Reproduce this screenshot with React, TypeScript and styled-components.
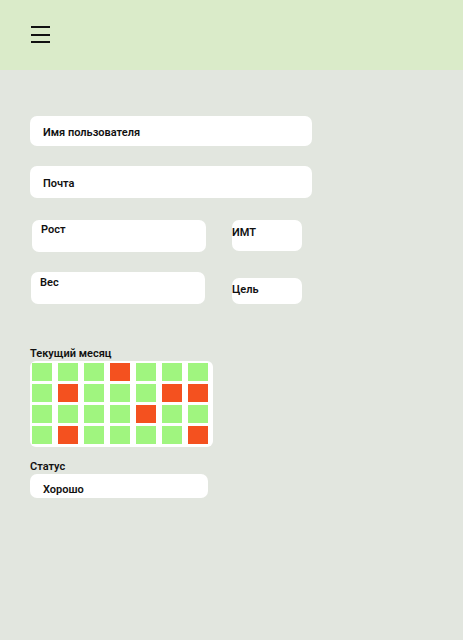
import React from 'react'
import styled, { createGlobalStyle } from 'styled-components'

const GlobalStyle = createGlobalStyle`
  html, body {
    margin: 0;
    padding: 0;
    background: #e2e6df;
    font-family: Roboto, Inter, 'Noto Sans', sans-serif;
    color: #111;
  }
`

const Page = styled.div`
  min-height: 640px;
  background: #e2e6df;
`

const Header = styled.header`
  height: 70px;
  background: #daebc9;
  display: flex;
  align-items: center;
  padding-left: 31px;
  box-sizing: border-box;
`

const MenuButton = styled.button`
  width: 19px;
  height: 17px;
  padding: 0;
  border: 0;
  background: transparent;
  display: flex;
  flex-direction: column;
  justify-content: space-between;
  cursor: pointer;
  margin-top: -1px;
`

const MenuLine = styled.span`
  display: block;
  height: 2px;
  background: #111;
`

const Main = styled.main`
  padding: 46px 0 0 30px;
  display: flex;
  flex-direction: column;
`

const Label = styled.div<{ $pt?: number }>`
  font-size: 11px;
  line-height: 14px;
  font-weight: 600;
  padding-top: ${({ $pt }) => $pt ?? 0}px;
`

const Field = styled.div<{ $width: number; $height: number; $mt?: number; $pad?: string; $align?: string }>`
  box-sizing: border-box;
  width: ${({ $width }) => $width}px;
  height: ${({ $height }) => $height}px;
  margin-top: ${({ $mt }) => $mt ?? 0}px;
  padding: ${({ $pad }) => $pad ?? '0 13px'};
  background: #fff;
  border-radius: 7px;
  display: flex;
  align-items: ${({ $align }) => $align ?? 'center'};
  font-size: 11px;
  line-height: 14px;
  font-weight: 600;
`

const MetricRow = styled.div<{ $mt: number; $ml: number; $gap: number }>`
  display: flex;
  align-items: flex-start;
  gap: ${({ $gap }) => $gap}px;
  margin-top: ${({ $mt }) => $mt}px;
  margin-left: ${({ $ml }) => $ml}px;
`

const Section = styled.section<{ $mt: number }>`
  margin-top: ${({ $mt }) => $mt}px;
`

const Calendar = styled.div`
  box-sizing: border-box;
  width: 183px;
  padding: 2px 5px 3px 2px;
  background: #fff;
  border-radius: 6px;
  display: grid;
  grid-template-columns: repeat(7, 20px);
  grid-auto-rows: 18px;
  column-gap: 6px;
  row-gap: 3px;
`

const Day = styled.div<{ $bad: boolean }>`
  background: ${({ $bad }) => ($bad ? '#f4511f' : '#a0f57f')};
`

const month = [
  0, 0, 0, 1, 0, 0, 0,
  0, 1, 0, 0, 0, 1, 1,
  0, 0, 0, 0, 1, 0, 0,
  0, 1, 0, 0, 0, 0, 1,
]

export default function App() {
  return (
    <Page>
      <GlobalStyle />
      <Header>
        <MenuButton aria-label="Меню">
          <MenuLine />
          <MenuLine />
          <MenuLine />
        </MenuButton>
      </Header>
      <Main>
        <Field $width={282} $height={30} $pad="3px 13px 0">Имя пользователя</Field>
        <Field $width={282} $height={32} $mt={20} $pad="3px 13px 0">Почта</Field>

        <MetricRow $mt={22} $ml={2} $gap={26}>
          <Field $width={174} $height={32} $pad="3px 9px" $align="flex-start">Рост</Field>
          <Field $width={70} $height={31} $pad="6px 0" $align="flex-start">ИМТ</Field>
        </MetricRow>
        <MetricRow $mt={20} $ml={1} $gap={27}>
          <Field $width={174} $height={32} $pad="4px 9px" $align="flex-start">Вес</Field>
          <Field $width={70} $height={26} $mt={6} $pad="0 0 2px">Цель</Field>
        </MetricRow>

        <Section $mt={42}>
          <Label $pt={1}>Текущий месяц</Label>
          <Calendar>
            {month.map((bad, i) => (
              <Day key={i} $bad={bad === 1} />
            ))}
          </Calendar>
        </Section>

        <Section $mt={13}>
          <Label>Статус</Label>
          <Field $width={178} $height={24} $pad="9px 13px 0" $align="flex-start">Хорошо</Field>
        </Section>
      </Main>
    </Page>
  )
}
